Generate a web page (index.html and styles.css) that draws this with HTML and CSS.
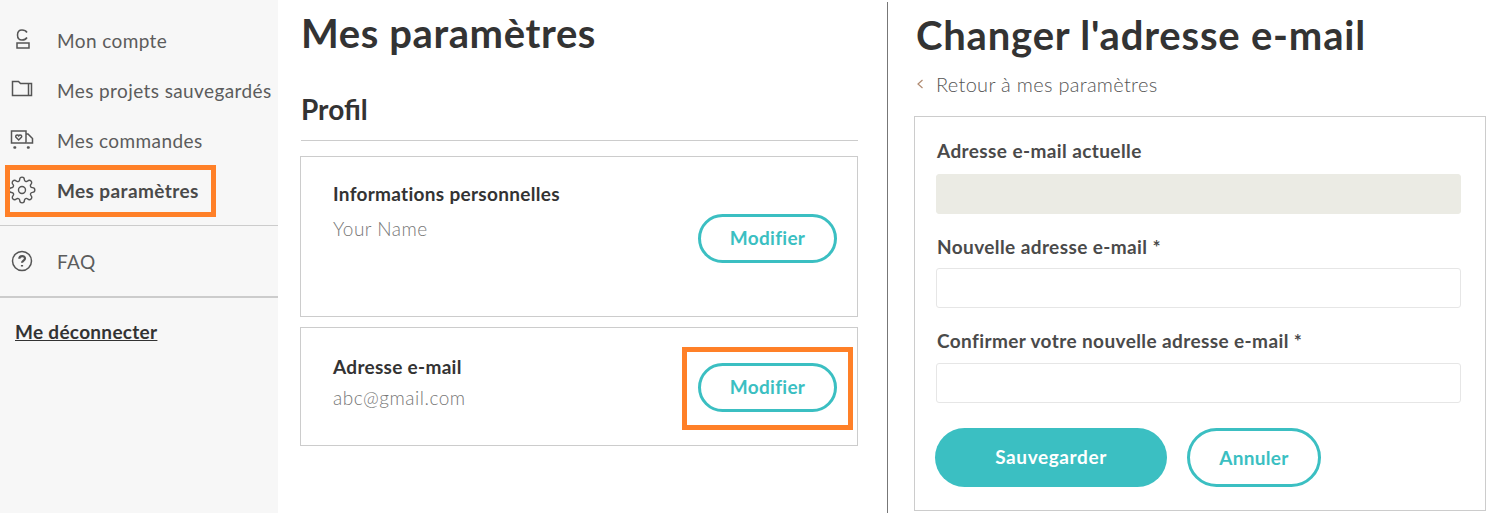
FILE: index.html
```html
<!DOCTYPE html>
<html lang="fr">
<head>
<meta charset="UTF-8">
<meta name="viewport" content="width=device-width, initial-scale=1.0">
<title>Changer l'adresse e-mail</title>
<link rel="stylesheet" href="styles.css">
</head>
<body>

<div class="page">
    <aside class="sidebar">
        <ul class="nav">
            <li class="nav-item">
                <svg class="nav-icon" viewBox="0 0 24 24"><path d="M17 4.500C16 2.800 14.500 2 12 2C9 2 7.500 4 7.500 7C7.500 10 9 12 12 12C14.500 12 16 11.200 17 9.500"/><rect x="7" y="15" width="12" height="5"/></svg>
                <span>Mon compte</span>
            </li>
            <li class="nav-item">
                <svg class="nav-icon" viewBox="0 0 24 24"><path d="M2.500 3.500h6l2 2h11v12H2.500z"/><path d="M18.500 5.500v12"/></svg>
                <span>Mes projets sauvegardés</span>
            </li>
            <li class="nav-item">
                <svg class="nav-icon" viewBox="0 0 24 24"><path d="M1.500 3h14.500v12H1.500z"/><path d="M8.700 12l-2.700-2.800c-1.200-1.500 1.500-3.200 2.700-1.300 1.200-1.900 3.900-.2 2.700 1.300z"/><path d="M16 6h2l4.500 4.500v4.500h-6"/><path class="dot" d="M4.500 19.500h.6M18 19.500h.6"/></svg>
                <span>Mes commandes</span>
            </li>
            <li class="nav-item nav-item-active">
                <svg class="nav-icon nav-icon-large" viewBox="0 0 24 24"><circle cx="12" cy="12" r="3"/><path d="M19.400 15a1.650 1.650 0 0 0 .33 1.820l.06.06a2 2 0 0 1 0 2.830 2 2 0 0 1-2.830 0l-.06-.06a1.650 1.650 0 0 0-1.820-.33 1.650 1.650 0 0 0-1 1.510V21a2 2 0 0 1-2 2 2 2 0 0 1-2-2v-.09A1.650 1.650 0 0 0 9 19.400a1.650 1.650 0 0 0-1.820.33l-.06.06a2 2 0 0 1-2.830 0 2 2 0 0 1 0-2.830l.06-.06a1.650 1.650 0 0 0 .33-1.820 1.650 1.650 0 0 0-1.510-1H3a2 2 0 0 1-2-2 2 2 0 0 1 2-2h.09A1.650 1.650 0 0 0 4.600 9a1.650 1.650 0 0 0-.33-1.820l-.06-.06a2 2 0 0 1 0-2.830 2 2 0 0 1 2.830 0l.06.06a1.650 1.650 0 0 0 1.820.33H9a1.650 1.650 0 0 0 1-1.510V3a2 2 0 0 1 2-2 2 2 0 0 1 2 2v.09a1.650 1.650 0 0 0 1 1.510 1.650 1.650 0 0 0 1.820-.33l.06-.06a2 2 0 0 1 2.830 0 2 2 0 0 1 0 2.830l-.06.06a1.650 1.650 0 0 0-.33 1.820V9a1.650 1.650 0 0 0 1.510 1H21a2 2 0 0 1 2 2 2 2 0 0 1-2 2h-.09a1.650 1.650 0 0 0-1.510 1z"/></svg>
                <span>Mes paramètres</span>
                <span class="mark mark-nav"></span>
            </li>
        </ul>
        <hr class="nav-rule">
        <div class="nav-item">
            <svg class="nav-icon" viewBox="0 0 24 24"><circle cx="12" cy="12" r="9.500"/><path class="qmark" d="M9.300 9.700c0-3.500 5.700-3.500 5.700-.2 0 2-3 2.200-3 4.300"/><path class="qmark" d="M12 16v1.500"/></svg>
            <span>FAQ</span>
        </div>
        <hr class="nav-rule nav-rule-thick">
        <a class="logout" href="#">Me déconnecter</a>
    </aside>

    <main class="settings">
        <h1 class="page-title">Mes paramètres</h1>
        <h2 class="section-title">Profil</h2>
        <section class="card card-tall">
            <div>
                <h3 class="card-title">Informations personnelles</h3>
                <p class="card-value">Your Name</p>
            </div>
            <button type="button" class="btn btn-outline btn-edit">Modifier</button>
        </section>
        <section class="card card-short">
            <div>
                <h3 class="card-title">Adresse e-mail</h3>
                <p class="card-value">abc@gmail.com</p>
            </div>
            <button type="button" class="btn btn-outline btn-edit">Modifier<span class="mark mark-btn"></span></button>
        </section>
    </main>

    <section class="change-email">
        <h1 class="page-title">Changer l'adresse e-mail</h1>
        <a class="back-link" href="#"><svg class="back-icon" viewBox="0 0 8 10"><path d="M6.500 1L2 5l4.500 4"/></svg>Retour à mes paramètres</a>
        <form class="email-form">
            <label for="currentEmail" class="label-first">Adresse e-mail actuelle</label>
            <input type="text" id="currentEmail" disabled>
            <label for="newEmail">Nouvelle adresse e-mail *</label>
            <input type="text" id="newEmail">
            <label for="confirmEmail" class="label-last">Confirmer votre nouvelle adresse e-mail *</label>
            <input type="text" id="confirmEmail">
            <div class="form-actions">
                <button type="button" class="btn btn-solid">Sauvegarder</button>
                <button type="button" class="btn btn-outline btn-cancel">Annuler</button>
            </div>
        </form>
    </section>
</div>

</body>
</html>
```

FILE: styles.css
```css
* {
    box-sizing: border-box;
}
html, body {
    height: 100%;
}
body {
    margin: 0;
    font-family: Lato, "Open Sans", sans-serif;
    color: #333;
    background-color: #fff;
    overflow: hidden;
}
.page {
    display: flex;
    height: 513px;
}

/* left menu */
.sidebar {
    flex: 0 0 278px;
    padding-top: 16px;
    background-color: #f7f7f7;
}
.nav {
    list-style: none;
    margin: 0;
    padding: 0;
}
.nav-item {
    position: relative;
    display: flex;
    align-items: center;
    height: 50px;
    padding-left: 10px;
    padding-bottom: 2px;
    font-size: 19px;
    letter-spacing: .4px;
    color: #5c5c5c;
}
.nav-item-active {
    font-weight: 700;
    color: #4a4a4a;
}
.nav-icon {
    flex: 0 0 24px;
    width: 24px;
    height: 24px;
    margin-right: 23px;
    fill: none;
    stroke: #555;
    stroke-width: 1.500;
}
.nav-icon-large {
    flex-basis: 28px;
    width: 28px;
    height: 28px;
    margin-left: -2px;
    margin-right: 21px;
    stroke-width: 1.200;
}
.dot {
    stroke-width: 2.500;
    stroke-linecap: round;
}
.qmark {
    stroke-width: 2.200;
}
.nav-rule {
    margin: 9px 0 11px;
    border: 0;
    border-top: 1px solid #ccc;
}
.nav-rule-thick {
    margin: 9px 0 22px;
    border-top-width: 2px;
}
.logout {
    margin-left: 15px;
    font-size: 19px;
    font-weight: 700;
    letter-spacing: .3px;
    color: #333;
}

/* orange annotation boxes */
.mark {
    position: absolute;
    border: 5px solid #ff8028;
    pointer-events: none;
}
.mark-nav {
    left: 5px;
    top: -1px;
    width: 211px;
    height: 52px;
}
.mark-btn {
    left: -19px;
    top: -19px;
    width: 171px;
    height: 83px;
}

/* settings column */
.settings {
    flex: 0 0 610px;
    padding: 0 29px 0 23px;
    border-right: 1px solid #777;
    margin-top: 2px;
}
.page-title {
    margin: 0;
    font-size: 40px;
    line-height: 62px;
    font-weight: 700;
    color: #333;
    letter-spacing: .6px;
}
.change-email .page-title {
    letter-spacing: .8px;
}
.section-title {
    margin: 27px 0 0;
    padding-bottom: 13px;
    border-bottom: 1px solid #ccc;
    font-size: 28px;
    line-height: 36px;
    font-weight: 700;
}
.card {
    display: flex;
    justify-content: space-between;
    margin-left: -1px;
    border: 1px solid #ccc;
}
.card-tall {
    height: 161px;
    margin-top: 15px;
    padding: 26px 20px 0 32px;
}
.card-short {
    height: 119px;
    margin-top: 10px;
    padding: 28px 20px 0 32px;
}
.card-title {
    margin: 0;
    font-size: 19px;
    line-height: 22px;
    font-weight: 700;
    letter-spacing: .3px;
}
.card-value {
    margin: 13px 0 0;
    font-size: 19px;
    line-height: 22px;
    font-weight: 300;
    letter-spacing: .5px;
    color: #777;
}
.card-short .card-value {
    margin-top: 9px;
}
.btn {
    font-family: inherit;
    font-weight: 700;
    font-size: 19px;
    letter-spacing: .3px;
    border-radius: 30px;
    cursor: pointer;
}
.btn-outline {
    color: #3bbfc2;
    background-color: #fff;
    border: 3px solid #3bbfc2;
}
.btn-edit {
    position: relative;
    width: 139px;
    height: 49px;
    padding: 0 0 2px;
}
.card-tall .btn-edit {
    margin-top: 31px;
}
.card-short .btn-edit {
    margin-top: 7px;
}

/* change e-mail column */
.change-email {
    flex: 1;
    padding: 4px 2px 0 28px;
}
.back-link {
    display: flex;
    align-items: center;
    margin-top: 5px;
    font-size: 20px;
    line-height: 26px;
    font-weight: 300;
    letter-spacing: .3px;
    color: #555;
    text-decoration: none;
}
.back-icon {
    width: 8px;
    height: 10px;
    margin-right: 12px;
    fill: none;
    stroke: #b08a70;
    stroke-width: 1.200;
}
.email-form {
    height: 395px;
    margin: 19px 0 0 -2px;
    padding: 22px 24px 0 21px;
    border: 1px solid #ccc;
}
.email-form label {
    display: block;
    margin-bottom: 9px;
    padding-left: 1px;
    font-size: 19px;
    line-height: 24px;
    font-weight: 700;
    letter-spacing: .4px;
    color: #4a4a4a;
}
.email-form .label-first {
    margin-bottom: 11px;
}
.email-form .label-last {
    margin-bottom: 10px;
}
.email-form input {
    display: block;
    width: 100%;
    height: 40px;
    margin-bottom: 21px;
    background-color: #fff;
    border: 1px solid #e6e6e6;
    border-radius: 3px;
}
.email-form input:disabled {
    background-color: #ebebe4;
    border-color: #ebebe4;
}
.form-actions {
    display: flex;
    gap: 20px;
    margin: 25px 0 0 -1px;
}
.btn-solid {
    width: 232px;
    height: 59px;
    padding-bottom: 4px;
    letter-spacing: .6px;
    color: #fff;
    background-color: #3bbfc2;
    border: 0;
}
.btn-cancel {
    width: 134px;
    height: 59px;
    padding-bottom: 2px;
}
```
